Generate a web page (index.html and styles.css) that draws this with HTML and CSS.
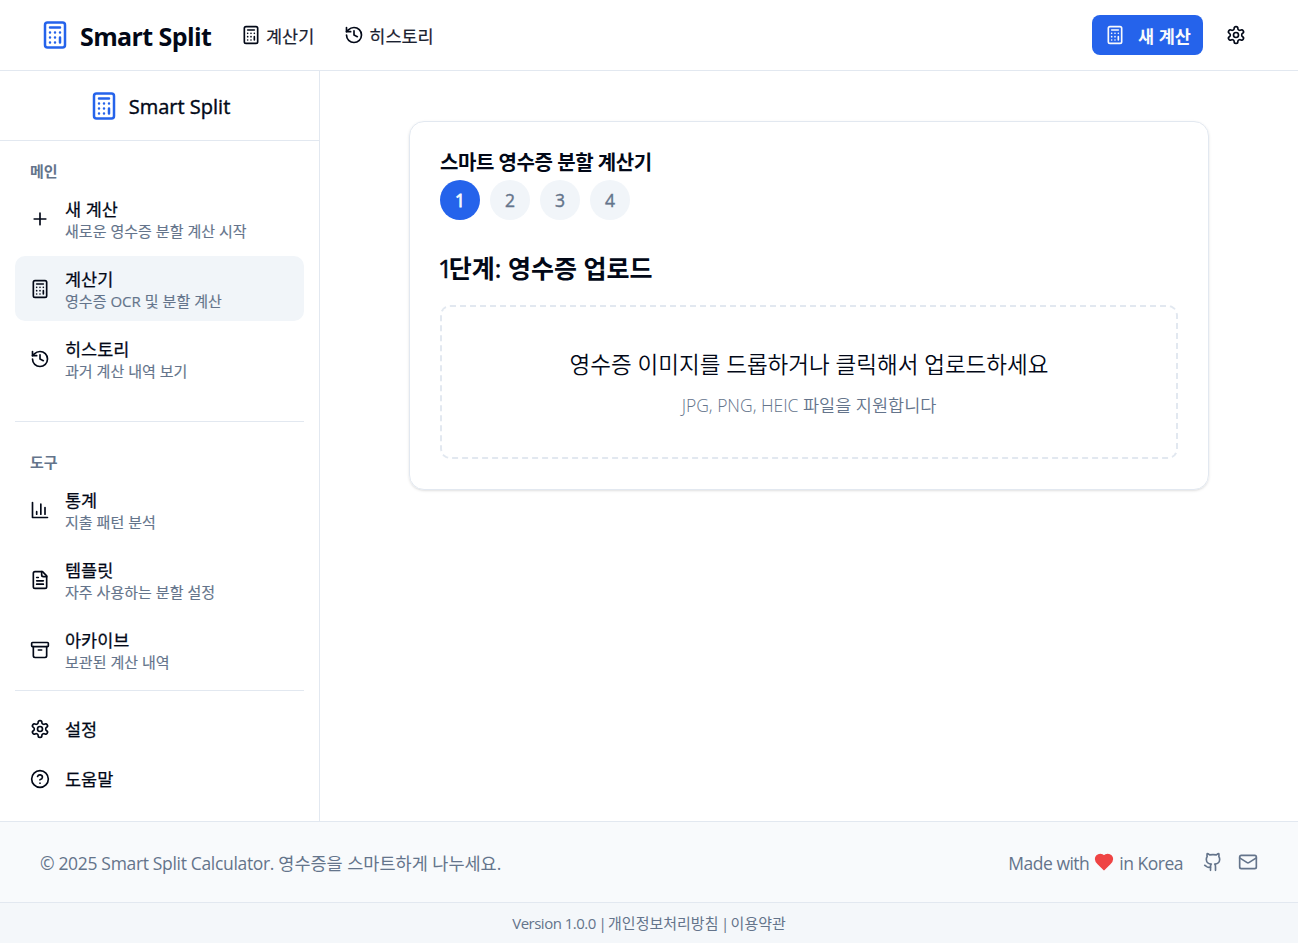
FILE: index.html
```html
<!DOCTYPE html>
<html lang="ko">
<head>
<meta charset="utf-8">
<title>Smart Split</title>
<link rel="stylesheet" href="styles.css">
</head>
<body>
<svg class="sprite" aria-hidden="true">
  <symbol id="calc" viewBox="0 0 24 24"><rect width="16" height="20" x="4" y="2" rx="2"/><path d="M8 6h8M16 14v4M16 10h.01M12 10h.01M8 10h.01M12 14h.01M8 14h.01M12 18h.01M8 18h.01"/></symbol>
  <symbol id="history" viewBox="0 0 24 24"><path d="M3 12a9 9 0 1 0 9-9 9.75 9.75 0 0 0-6.74 2.74L3 8"/><path d="M3 3v5h5M12 7v5l4 2"/></symbol>
  <symbol id="gear" viewBox="0 0 24 24"><path d="M12.22 2h-.44a2 2 0 0 0-2 2v.18a2 2 0 0 1-1 1.73l-.43.25a2 2 0 0 1-2 0l-.15-.08a2 2 0 0 0-2.73.73l-.22.38a2 2 0 0 0 .73 2.73l.15.1a2 2 0 0 1 1 1.72v.51a2 2 0 0 1-1 1.74l-.15.09a2 2 0 0 0-.73 2.73l.22.38a2 2 0 0 0 2.73.73l.15-.08a2 2 0 0 1 2 0l.43.25a2 2 0 0 1 1 1.73V20a2 2 0 0 0 2 2h.44a2 2 0 0 0 2-2v-.18a2 2 0 0 1 1-1.73l.43-.25a2 2 0 0 1 2 0l.15.08a2 2 0 0 0 2.73-.73l.22-.39a2 2 0 0 0-.73-2.73l-.15-.08a2 2 0 0 1-1-1.74v-.5a2 2 0 0 1 1-1.74l.15-.09a2 2 0 0 0 .73-2.73l-.22-.38a2 2 0 0 0-2.73-.73l-.15.08a2 2 0 0 1-2 0l-.43-.25a2 2 0 0 1-1-1.73V4a2 2 0 0 0-2-2z"/><circle cx="12" cy="12" r="3"/></symbol>
  <symbol id="plus" viewBox="0 0 24 24"><path d="M5 12h14M12 5v14"/></symbol>
  <symbol id="chart" viewBox="0 0 24 24"><path d="M3 3v18h18M18 17V9M13 17V5M8 17v-3"/></symbol>
  <symbol id="file" viewBox="0 0 24 24"><path d="M15 2H6a2 2 0 0 0-2 2v16a2 2 0 0 0 2 2h12a2 2 0 0 0 2-2V7z"/><path d="M14 2v4a2 2 0 0 0 2 2h4M10 9H8M16 13H8M16 17H8"/></symbol>
  <symbol id="archive" viewBox="0 0 24 24"><rect width="20" height="5" x="2" y="3" rx="1"/><path d="M4 8v11a2 2 0 0 0 2 2h12a2 2 0 0 0 2-2V8M10 12h4"/></symbol>
  <symbol id="help" viewBox="0 0 24 24"><circle cx="12" cy="12" r="10"/><path d="M9.09 9a3 3 0 0 1 5.83 1c0 2-3 3-3 3M12 17h.01"/></symbol>
  <symbol id="heart" viewBox="0 0 24 24"><path d="M19 14c1.49-1.46 3-3.21 3-5.5A5.5 5.5 0 0 0 16.5 3c-1.76 0-3 .5-4.5 2-1.5-1.5-2.74-2-4.5-2A5.5 5.5 0 0 0 2 8.500c0 2.300 1.500 4.050 3 5.500l7 7Z"/></symbol>
  <symbol id="github" viewBox="0 0 24 24"><path d="M15 22v-4a4.800 4.800 0 0 0-1-3.500c3 0 6-2 6-5.500.08-1.250-.27-2.480-1-3.500.28-1.150.28-2.350 0-3.500 0 0-1 0-3 1.500-2.640-.5-5.360-.5-8 0C6 2 5 2 5 2c-.3 1.150-.3 2.350 0 3.500A5.403 5.403 0 0 0 4 9c0 3.500 3 5.500 6 5.500-.39.49-.68 1.050-.85 1.650-.17.6-.22 1.230-.15 1.850v4"/><path d="M9 18c-4.510 2-5-2-7-2"/></symbol>
  <symbol id="mail" viewBox="0 0 24 24"><rect width="20" height="16" x="2" y="4" rx="2"/><path d="m22 7-8.970 5.700a1.940 1.940 0 0 1-2.060 0L2 7"/></symbol>
</svg>

<header class="topbar">
  <a class="brand"><svg class="icon icon-lg blue"><use href="#calc"/></svg><span class="brand-name">Smart Split</span></a>
  <nav class="topnav">
    <a class="topnav-link"><svg class="icon"><use href="#calc"/></svg><span>계산기</span></a>
    <a class="topnav-link"><svg class="icon"><use href="#history"/></svg><span>히스토리</span></a>
  </nav>
  <div class="top-actions">
    <button class="btn-new"><svg class="icon"><use href="#calc"/></svg><span>새 계산</span></button>
    <button class="btn-icon"><svg class="icon"><use href="#gear"/></svg></button>
  </div>
</header>

<div class="body">
  <aside class="sidebar">
    <div class="side-brand"><svg class="icon icon-lg blue"><use href="#calc"/></svg><span class="side-name">Smart Split</span></div>
    <div class="side-content">
      <section class="group">
        <h2 class="group-label">메인</h2>
        <a class="item"><svg class="icon"><use href="#plus"/></svg><span class="item-text"><b>새 계산</b><small>새로운 영수증 분할 계산 시작</small></span></a>
        <a class="item active"><svg class="icon"><use href="#calc"/></svg><span class="item-text"><b>계산기</b><small>영수증 OCR 및 분할 계산</small></span></a>
        <a class="item"><svg class="icon"><use href="#history"/></svg><span class="item-text"><b>히스토리</b><small>과거 계산 내역 보기</small></span></a>
      </section>
      <section class="group tools">
        <h2 class="group-label">도구</h2>
        <a class="item"><svg class="icon"><use href="#chart"/></svg><span class="item-text"><b>통계</b><small>지출 패턴 분석</small></span></a>
        <a class="item"><svg class="icon"><use href="#file"/></svg><span class="item-text"><b>템플릿</b><small>자주 사용하는 분할 설정</small></span></a>
        <a class="item"><svg class="icon"><use href="#archive"/></svg><span class="item-text"><b>아카이브</b><small>보관된 계산 내역</small></span></a>
      </section>
    </div>
    <div class="side-footer">
      <a class="item short"><svg class="icon"><use href="#gear"/></svg><span class="item-text"><b>설정</b></span></a>
      <a class="item short"><svg class="icon"><use href="#help"/></svg><span class="item-text"><b>도움말</b></span></a>
    </div>
  </aside>

  <main class="main">
    <div class="card">
      <h1 class="card-title">스마트 영수증 분할 계산기</h1>
      <ol class="steps"><li class="step current">1</li><li class="step">2</li><li class="step">3</li><li class="step">4</li></ol>
      <h2 class="step-title"><span class="numeral">1</span>단계<span class="colon">:</span> 영수증 업로드</h2>
      <div class="dropzone">
        <p class="drop-main">영수증 이미지를 드롭하거나 클릭해서 업로드하세요</p>
        <p class="drop-sub">JPG, PNG, HEIC 파일을 지원합니다</p>
      </div>
    </div>
  </main>
</div>

<footer class="footer">
  <div class="foot-row">
    <p class="copyright"><span class="latin">© 2025 Smart Split Calculator. </span>영수증을 스마트하게 나누세요.</p>
    <div class="foot-right">
      <p class="made"><span>Made with</span><svg class="icon heart"><use href="#heart"/></svg><span>in Korea</span></p>
      <svg class="icon github"><use href="#github"/></svg>
      <svg class="icon"><use href="#mail"/></svg>
    </div>
  </div>
  <div class="foot-bottom"><p class="version"><span class="number">Version 1.0.0</span><span class="sep"> | </span>개인정보처리방침<span class="sep"> | </span>이용약관</p></div>
</footer>
</body>
</html>
```
FILE: styles.css
```css
* { box-sizing: border-box; margin: 0; padding: 0; }
body {
  height: 943px;
  display: flex;
  flex-direction: column;
  font-family: "Open Sans", "Noto Sans CJK KR", sans-serif;
  color: #020817;
  background: #fff;
  overflow: hidden;
  white-space: nowrap;
}
.sprite { display: none; }
.icon {
  width: 20px; height: 20px; flex: none;
  fill: none; stroke: currentColor; stroke-width: 2;
  stroke-linecap: round; stroke-linejoin: round;
}
.icon-lg { width: 30px; height: 30px; }
.blue { color: #2563eb; }

.topbar {
  height: 71px; flex: none;
  display: flex; align-items: center;
  padding: 0 40px;
  border-bottom: 1px solid #e2e8f0;
}
.brand { display: flex; align-items: center; gap: 10px; width: 171px; }
.brand-name { font-size: 25px; font-weight: 700; line-height: 35px; letter-spacing: -0.6px; padding-top: 3px; }
.topnav { display: flex; gap: 30px; margin-left: 30px; }
.topnav-link { display: flex; align-items: center; gap: 5px; font-size: 17.5px; font-weight: 400; line-height: 25px; color: #1b2130; }
.topnav-link span { padding-top: 2px; -webkit-text-stroke: 0.2px; }
.topnav-link .icon { color: #020817; }
.top-actions { margin-left: auto; display: flex; gap: 10px; }
button { border: 0; background: none; font: inherit; color: inherit; }
.btn-new {
  width: 111px; height: 40px; border-radius: 8px;
  display: flex; align-items: center; gap: 13px; padding: 0 13px;
  background: #2563eb; color: #f8fafc;
  font-size: 17.5px; font-weight: 700;
}
.btn-icon { width: 45px; height: 40px; display: grid; place-items: center; }

.body { flex: 1; display: flex; min-height: 0; }
.sidebar { width: 320px; flex: none; display: flex; flex-direction: column; border-right: 1px solid #e2e8f0; }
.side-brand { height: 70px; flex: none; display: flex; align-items: center; justify-content: center; gap: 10px; border-bottom: 1px solid #e2e8f0; }
.side-name { font-size: 20px; font-weight: 400; line-height: 30px; padding-top: 2px; -webkit-text-stroke: 0.4px; }
.side-content { padding: 15px 15px 0; }
.group-label { height: 30px; line-height: 30px; padding-left: 15px; font-size: 15px; font-weight: 700; color: #64748b; }
.item { display: flex; align-items: center; gap: 15px; height: 65px; padding: 0 15px; border-radius: 10px; margin-bottom: 5px; }
.active { background: #f1f5f9; }
.item-text { display: flex; flex-direction: column; }
.item-text b { font-size: 17.5px; font-weight: 400; line-height: 24px; padding-top: 1px; -webkit-text-stroke: 0.25px; }
.item-text small { font-size: 15px; font-weight: 400; line-height: 20px; letter-spacing: 0.03px; color: #64748b; -webkit-text-stroke: 0.15px; }
.tools { margin-top: 30px; border-top: 1px solid #e2e8f0; padding-top: 25px; }
.side-footer { margin: auto 15px 0; border-top: 1px solid #e2e8f0; padding: 15px 0; }
.short { height: 45px; }

.main { flex: 1; display: flex; justify-content: center; align-items: flex-start; padding-top: 50px; }
.card {
  width: 800px; height: 369px; padding: 31px 30px 30px;
  border: 1px solid #e2e8f0; border-radius: 15px;
  box-shadow: 0 1px 3px rgba(0,0,0,.1), 0 1px 2px -1px rgba(0,0,0,.1);
}
.card-title { font-size: 20px; font-weight: 700; line-height: 20px; letter-spacing: -0.45px; }
.steps { display: flex; gap: 10px; list-style: none; margin-top: 7px; }
.step { width: 40px; height: 40px; border-radius: 50%; display: grid; place-items: center; background: #f1f5f9; color: #64748b; font-size: 17.5px; -webkit-text-stroke: 0.4px; }
.current { background: #2563eb; color: #f8fafc; -webkit-text-stroke: 0.8px; }
.step-title { margin-top: 31px; font-size: 25px; font-weight: 700; line-height: 35px; }
.numeral { font-weight: 400; letter-spacing: -3.5px; margin-left: -2px; -webkit-text-stroke: 0.5px; }
.colon { font-weight: 400; -webkit-text-stroke: 0.5px; }
.dropzone { margin-top: 19px; height: 154px; border: 2px dashed #e2e8f0; border-radius: 10px; text-align: center; padding-top: 40px; }
.drop-main { font-size: 22.5px; line-height: 35px; font-weight: 350; }
.drop-sub { margin-top: 11px; font-size: 17.5px; line-height: 25px; font-weight: 350; color: #64748b; }

.footer { flex: none; border-top: 1px solid #e2e8f0; background: #f8fafc; color: #64748b; }
.foot-row { height: 80px; display: flex; justify-content: space-between; align-items: center; padding: 0 40px; }
.copyright, .made span { font-size: 17.5px; line-height: 25px; padding-top: 2px; }
.latin { letter-spacing: -0.33px; }
.foot-right { display: flex; align-items: center; }
.made { display: flex; align-items: center; gap: 5px; letter-spacing: -0.5px; }
.heart { color: #ef4444; fill: currentColor; }
.github { margin: 0 15px 0 20px; }
.foot-bottom { height: 41px; border-top: 1px solid #e2e8f0; background: #f4f7fa; text-align: center; }
.version { font-size: 15px; line-height: 40px; }
.number { letter-spacing: -0.5px; }
.sep { letter-spacing: -1.3px; }
```
